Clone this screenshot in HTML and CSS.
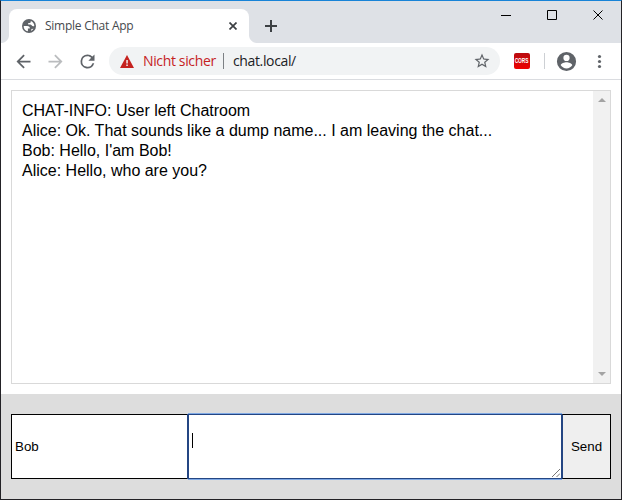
FILE: index.html
```
<!DOCTYPE html>
<html lang="de">
<head>
<meta charset="utf-8">
<title>Simple Chat App</title>
<link rel="stylesheet" href="styles.css">
</head>
<body>
<div class="window">
  <header class="tabstrip">
    <div class="tab">
      <svg class="globe" viewBox="0 0 14 14"><circle cx="7" cy="7" r="7"/><path class="land" d="M1.700 6.900h3.400c2 0 3 .9 2.700 2.600H5.900v2.700C3.200 11.700 1.500 9.600 1.700 6.900zM8.800 2c2.100.800 3.500 2.700 3.500 5-.8.600-2.200.400-2.700-.7-.3-.7-1-.9-1.900-.9H6.200V4h1.600c.8 0 1-.8 1-2zM9 12l.5-2 2-.2C10.900 10.800 10 11.600 9 12z"/></svg>
      <span class="tab-title">Simple Chat App</span>
      <svg class="tab-close" viewBox="0 0 8 8"><path d="M.5.5l7 7m0-7l-7 7"/></svg>
    </div>
    <svg class="new-tab" viewBox="0 0 12 12"><path d="M6 0v12M0 6h12"/></svg>
    <div class="controls">
      <svg viewBox="0 0 46 30"><path d="M18 15.500h10"/></svg>
      <svg viewBox="0 0 46 30"><path d="M18.500 10.500h9v9h-9z"/></svg>
      <svg viewBox="0 0 46 30"><path d="M18.500 10.500l9 9m0-9l-9 9"/></svg>
    </div>
  </header>
  <nav class="toolbar">
    <svg class="nav-icon" viewBox="0 0 24 24"><path d="M20 11H7.830l5.590-5.590L12 4l-8 8 8 8 1.410-1.410L7.830 13H20z"/></svg>
    <svg class="nav-icon disabled" viewBox="0 0 24 24"><path d="M4 11h12.170l-5.590-5.590L12 4l8 8-8 8-1.410-1.410L16.170 13H4z"/></svg>
    <svg class="nav-icon" viewBox="0 0 24 24"><path d="M17.650 6.350A7.960 7.960 0 0 0 12 4a8 8 0 1 0 7.730 10h-2.080A6 6 0 1 1 12 6c1.660 0 3.140.690 4.220 1.780L13 11h7V4z"/></svg>
    <div class="address">
      <svg class="warning" viewBox="0 0 14 13"><path d="M7 0l7 13H0z"/><path class="mark" d="M6.300 5h1.500v3.500H6.300zm0 4.500h1.500V11H6.300z"/></svg>
      <span class="insecure">Nicht sicher</span>
      <span class="address-rule"></span>
      <span class="url">chat.local/</span>
      <svg class="star" viewBox="0 0 24 24"><path d="M22 9.240l-7.190-.620L12 2 9.190 8.630 2 9.240l5.460 4.730L5.820 21 12 17.270 18.180 21l-1.630-7.030zM12 15.400l-3.760 2.270 1-4.280-3.320-2.880 4.380-.380L12 6.100l1.710 4.040 4.380.380-3.320 2.880 1 4.280z"/></svg>
    </div>
    <span class="extension"><span>CORS</span></span>
    <span class="toolbar-rule"></span>
    <svg class="profile" viewBox="0 0 24 24"><path d="M12 2a10 10 0 1 0 0 20 10 10 0 0 0 0-20zm0 3a3 3 0 1 1 0 6.500A3 3 0 0 1 12 5zm0 14.200a7.200 7.200 0 0 1-6-3.220c.030-1.990 4-3.080 6-3.080s5.970 1.090 6 3.080a7.200 7.200 0 0 1-6 3.220z"/></svg>
    <svg class="menu" viewBox="0 0 3 13"><circle cx="1.500" cy="1.500" r="1.600"/><circle cx="1.500" cy="6.500" r="1.600"/><circle cx="1.500" cy="11.500" r="1.600"/></svg>
  </nav>
  <main class="page">
    <section class="chat">
      <div class="messages">
        <div>CHAT-INFO: User left Chatroom</div>
        <div>Alice: Ok. That sounds like a dump name... I am leaving the chat...</div>
        <div>Bob: Hello, I'am Bob!</div>
        <div>Alice: Hello, who are you?</div>
      </div>
      <div class="scrollbar">
        <svg viewBox="0 0 8 4"><path d="M4 0l4 4H0z"/></svg>
        <svg viewBox="0 0 8 4"><path d="M0 0h8L4 4z"/></svg>
      </div>
    </section>
  </main>
  <footer class="composer">
    <div class="name">Bob</div>
    <div class="message">
      <span class="caret"></span>
      <svg class="grip" viewBox="0 0 8 8"><path d="M0 8l8-8M4.500 8L8 4.500"/></svg>
    </div>
    <div class="send">Send</div>
  </footer>
</div>
</body>
</html>
```
FILE: styles.css
```
* { box-sizing: border-box; }
body { margin: 0; }
svg { display: block; flex: none; }

.window {
  display: flex;
  flex-direction: column;
  width: 622px;
  height: 500px;
  border: 1px solid #232226;
  border-top-color: #1883d7;
  background: #fff;
  font-family: "Liberation Sans", Arial, sans-serif;
  white-space: nowrap;
}

.tabstrip {
  display: flex;
  height: 42px;
  padding-left: 8px;
  background: #dee1e6;
}
.tab {
  position: relative;
  display: flex;
  align-items: center;
  width: 240px;
  height: 34px;
  margin-top: 8px;
  padding: 0 12px 0 13px;
  border-radius: 8px 8px 0 0;
  background: #fff;
}
.tab::before,
.tab::after {
  content: "";
  position: absolute;
  bottom: 0;
  width: 8px;
  height: 8px;
}
.tab::before { left: -8px; background: radial-gradient(circle at 0 0, transparent 7.500px, #fff 8.500px); }
.tab::after { right: -8px; background: radial-gradient(circle at 100% 0, transparent 7.500px, #fff 8.500px); }
.globe { width: 14px; height: 14px; fill: #5f6368; }
.globe .land { fill: #fff; }
.tab-title {
  margin-left: 9px;
  color: #45494d;
  font: 12px/16px "Open Sans", sans-serif;
  letter-spacing: -0.250px;
}
.tab-close { width: 8px; height: 8px; margin-left: auto; stroke: #3c4043; stroke-width: 1.700; }
.new-tab { width: 12px; height: 12px; margin: 19px 0 0 16px; stroke: #3c4043; stroke-width: 2; }
.controls { display: flex; margin-left: auto; }
.controls svg { width: 46px; height: 30px; margin-top: -1px; fill: none; stroke: #000; }

.toolbar {
  display: flex;
  align-items: center;
  height: 37px;
  padding-left: 12px;
  border-bottom: 1px solid #dadce0;
}
.nav-icon { width: 21px; height: 21px; margin-right: 11px; fill: #5f6368; }
.nav-icon.disabled { fill: #babcbe; }
.address {
  display: flex;
  align-items: center;
  width: 391px;
  height: 28px;
  padding: 0 9px 0 11px;
  border-radius: 14px;
  background: #f1f3f4;
  font: 14px/20px "Open Sans", sans-serif;
}
.warning { width: 14px; height: 13px; fill: #c5221f; }
.warning .mark { fill: #f1f3f4; }
.insecure { width: 80px; margin-left: 9px; color: #c5221f; letter-spacing: -0.360px; }
.address-rule { width: 1px; height: 16px; background: #7c8084; }
.url { margin-left: 9px; color: #202124; letter-spacing: -0.360px; }
.star { width: 18px; height: 18px; margin-left: auto; fill: #5f6368; }
.extension {
  display: flex;
  align-items: center;
  justify-content: center;
  width: 16px;
  height: 16px;
  margin-left: 14px;
  border-radius: 2px;
  background: linear-gradient(#b80c10, #ee0000);
  color: #fff;
  font: bold 8px/8px "Liberation Sans", sans-serif;
}
.extension span { transform: scaleX(.6); }
.toolbar-rule { width: 1px; height: 16px; margin-left: 14px; background: #cdd0d4; }
.profile { width: 23px; height: 23px; margin-left: 10px; fill: #5f6368; }
.menu { width: 3px; height: 13px; margin-left: 20px; overflow: visible; fill: #5f6368; }

.page { height: 314px; padding: 10px; }
.chat { display: flex; height: 294px; border: 1px solid #d9d9d9; }
.messages { flex: 1; padding: 10px; color: #000; font-size: 16px; line-height: 20px; }
.scrollbar {
  display: flex;
  flex-direction: column;
  justify-content: space-between;
  align-items: center;
  width: 17px;
  padding: 7px 0;
  background: #f1f1f1;
}
.scrollbar svg { width: 8px; height: 4px; fill: #a3a3a3; }

.composer {
  display: flex;
  flex: 1;
  align-items: flex-start;
  padding: 20px 10px;
  background: #ddd;
  color: #000;
  font-size: 13.333px;
}
.name, .message, .send { height: 65px; border: 1px solid #000; }
.name { display: flex; align-items: center; width: 177px; padding-left: 3px; background: #fff; }
.message {
  display: flex;
  align-items: flex-end;
  justify-content: space-between;
  width: 374px;
  padding: 1px;
  border-color: #244683;
  background: #fff;
  box-shadow: -1px 0 #244683, 0 -1px #7fa9e5, 0 1px #7fa9e5;
}
.caret { align-self: flex-start; width: 1px; height: 15px; margin: 17px 0 0 2px; background: #000; }
.grip { width: 8px; height: 8px; fill: none; stroke: #777; }
.send {
  display: flex;
  align-items: center;
  justify-content: center;
  width: 49px;
  border-left-color: #244683;
  background: #efefef;
}
```
